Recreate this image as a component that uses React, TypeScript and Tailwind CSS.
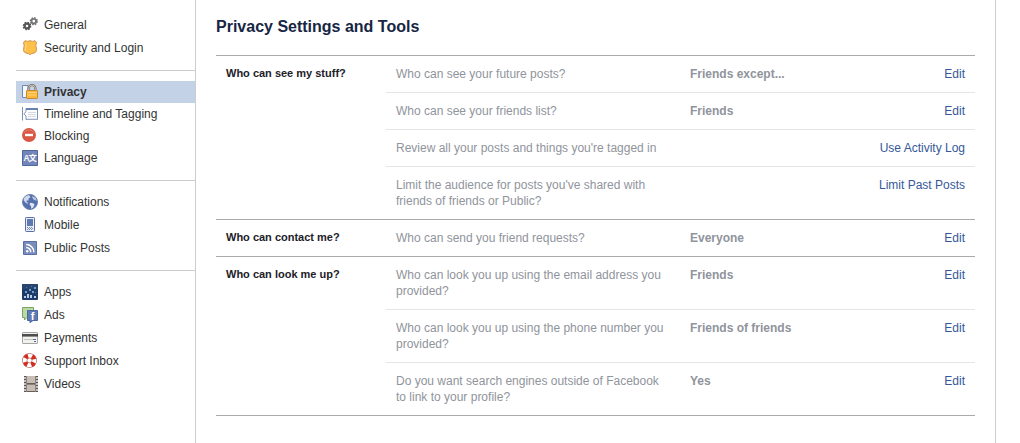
import React from 'react';

interface NavItem {
  label: string;
  icon: React.ReactNode;
  active?: boolean;
}

interface Setting {
  question: string;
  value?: string;
  action: string;
}

interface Section {
  title: string;
  settings: Setting[];
}

const Icon: React.FC<{ children: React.ReactNode }> = ({ children }) => (
  <svg className="w-4 h-4 shrink-0" viewBox="0 0 16 16" fill="none" aria-hidden="true">
    {children}
  </svg>
);

const gears = (
  <Icon>
    <circle cx="5" cy="9" r="2.4" stroke="#555" strokeWidth="2.2" />
    <circle cx="5" cy="9" r="3.7" stroke="#555" strokeWidth="1.3" strokeDasharray="1.6 1.3" />
    <circle cx="11.8" cy="4.2" r="2.3" stroke="#757575" strokeWidth="1.9" />
    <circle cx="11.8" cy="4.2" r="3.5" stroke="#757575" strokeWidth="1.3" strokeDasharray="1.5 1.25" />
  </Icon>
);

const badge = (
  <Icon>
    <path
      d="M3 .7 L5.4 1.4 L8 .7 L10.6 1.4 L13 .7 L14.6 2.8 C13.6 4.6 13.8 6 14.3 8 C14.8 10.4 14.2 12.6 12 13 C10.4 13.2 9.2 13.6 8 14.6 C6.8 13.6 5.6 13.2 4 13 C1.8 12.6 1.2 10.4 1.7 8 C2.2 6 2.4 4.6 1.4 2.8 Z"
      fill="#fdc04a"
      stroke="#d0954c"
      strokeLinejoin="round"
    />
    <path d="M4 3.4 C4.2 6 3 8 3.6 11" stroke="#ffdc86" />
  </Icon>
);

const lock = (
  <Icon>
    <path d="M.5 1.5h5.5v12H.5z" fill="#f5f8fd" stroke="#6f87b5" />
    <path d="M6.6 7.5V4.6a3.4 3.6 0 0 1 6.8 0v2.9" stroke="#736b60" strokeWidth="2.2" />
    <path d="M6.6 7.5V4.6a3.4 3.6 0 0 1 6.8 0v2.9" stroke="#dedad2" strokeWidth=".8" />
    <rect x="4.5" y="6.5" width="11" height="8" rx=".6" fill="#fdb83a" stroke="#c78834" />
    <path d="M5.5 8.5h9M5.5 11h9" stroke="#ffd27a" />
  </Icon>
);

const timeline = (
  <Icon>
    <path d="M.5 1v13.5" stroke="#8192b4" />
    <path d="M15.5 2.5H4v3.2L1.8 7.8 4 10v3.5h11.5z" fill="#fff" stroke="#7f93ba" />
    <path d="M4 2h12v2H4z" fill="#6681b2" />
    <path d="M6 6.5h8M6 8.5h8M6 10.5h8" stroke="#d4d8e1" />
    <path d="M5 13h10" stroke="#bcc4d5" />
  </Icon>
);

const blocked = (
  <Icon>
    <circle cx="7" cy="7" r="7" fill="#d85845" />
    <path d="M1.5 5a6 5 0 0 1 11 0" stroke="#e58775" strokeWidth=".8" />
    <rect x="3" y="5.8" width="8" height="2.4" fill="#fff" />
  </Icon>
);

const language = (
  <Icon>
    <path d="M.5.5h15v15H.5z" fill="#7486b8" stroke="#4f67a1" />
    <text x="1.6" y="11" fontSize="8.4" fontWeight="700" fill="#fff" fontFamily="'Liberation Sans', sans-serif">
      A
    </text>
    <text x="6.4" y="11" fontSize="8.4" fontWeight="700" fill="#fff" fontFamily="'Noto Sans CJK SC', sans-serif">
      文
    </text>
  </Icon>
);

const globe = (
  <Icon>
    <circle cx="8" cy="8" r="7.5" fill="#5570ac" stroke="#6b82b3" />
    <path d="M2 4.3 C3.5 2.2 5 1.2 7.3 1.3 L8.5 3.2 L6.4 4.8 L6.8 6.4 L4.7 6.6 L4.6 8.1 L6 8.7 L5.7 10 L3.4 8.5 L1.6 6.3 Z" fill="#cfd9ec" />
    <path d="M10 2 L13.5 3.8 L14.7 6.8 L12.2 5.9 L10.8 4.6 Z" fill="#bccae4" />
    <path d="M8 8.8 L11.3 9.3 L12.6 10.8 L11 13.8 L9.2 14.7 L9 12 L7.6 10.7 Z" fill="#dce4f3" />
  </Icon>
);

const phone = (
  <Icon>
    <rect x="3.5" y=".5" width="9" height="14" rx=".8" fill="#e9edf5" stroke="#5a70a3" />
    <path d="M5 2h6v7H5z" fill="#5f7ab0" />
    <path d="M5 10.5h6M5 12.5h6" stroke="#7a8db6" strokeDasharray="1 1" />
    <path d="M6 11.5h5" stroke="#7a8db6" strokeDasharray="1 1" />
  </Icon>
);

const feed = (
  <Icon>
    <path d="M1.5 1.5h13v13h-13z" fill="#7a8cbc" stroke="#586ea4" />
    <circle cx="5.2" cy="11.2" r="1.2" fill="#fff" />
    <path d="M4.2 7.5a4.5 4.5 0 0 1 4.5 4.7M4.2 4.5a7.5 7.5 0 0 1 7.6 7.7" stroke="#fff" strokeWidth="1.5" />
  </Icon>
);

const apps = (
  <Icon>
    <rect width="16" height="16" rx="1" fill="#1f3c68" />
    <path d="M0 1a1 1 0 0 1 1-1h14a1 1 0 0 1 1 1v4H0z" fill="#26456f" />
    <path d="M2 12h2v2H2zM5 10h2v4H5zM8 11h2v3H8zM12 12h2v2h-2z" fill="#b5cde8" />
    <path d="M3 7h2v2H3zM7 5h2v2H7zM10 7h2v2h-2zM12 3h2v2h-2z" fill="#6f9fd1" />
    <path d="M4 3h1v1H4zM9 2h1v1H9zM13 8h1v1h-1z" fill="#4c78ae" />
  </Icon>
);

const ads = (
  <Icon>
    <path d="M.5.5h11v10H5L2.5 13v-2.5h-2z" fill="#b9daa3" stroke="#79a462" />
    <path d="M5.5 3.5h10v10H11l-3 2.2v-2.2H5.5z" fill="#607bb3" stroke="#4a67a1" />
    <text x="8.8" y="13" fontSize="11" fontWeight="700" fill="#fff" fontFamily="'Liberation Sans', sans-serif">
      f
    </text>
  </Icon>
);

const card = (
  <Icon>
    <rect x=".5" y="2.5" width="15" height="11" rx=".5" fill="#f1f1ef" stroke="#a5a5a2" />
    <path d="M0 4h16v2.6H0z" fill="#4d4d4d" />
    <path d="M2 9.5h9" stroke="#c2c2bf" />
    <path d="M11 9.5h3M12 11.5h2" stroke="#5a6c90" />
  </Icon>
);

const lifebuoy = (
  <Icon>
    <circle cx="7.5" cy="7.5" r="4.8" stroke="#a5483c" strokeWidth="5" />
    <circle cx="7.5" cy="7.5" r="4.8" stroke="#fff" strokeWidth="4" />
    <circle
      cx="7.5"
      cy="7.5"
      r="4.8"
      stroke="#d22e20"
      strokeWidth="4.4"
      strokeDasharray="3.4 4.14"
      strokeDashoffset="-2.07"
    />
  </Icon>
);

const film = (
  <Icon>
    <path d="M2 0h14v16H2z" fill="#8b827c" />
    <path d="M5 0h8v7H5zM5 9h8v6H5z" fill="#c6bdb5" />
    <path d="M5 7.5h8M5 15.5h8" stroke="#665e59" />
    <path d="M3 0v16M15 0v16" stroke="#5a5450" strokeWidth="2" />
    <path d="M3 1v15M15 1v15" stroke="#f4f1ee" strokeWidth="1.4" strokeDasharray="2 1" />
  </Icon>
);

const navGroups: NavItem[][] = [
  [
    { label: 'General', icon: gears },
    { label: 'Security and Login', icon: badge },
  ],
  [
    { label: 'Privacy', icon: lock, active: true },
    { label: 'Timeline and Tagging', icon: timeline },
    { label: 'Blocking', icon: blocked },
    { label: 'Language', icon: language },
  ],
  [
    { label: 'Notifications', icon: globe },
    { label: 'Mobile', icon: phone },
    { label: 'Public Posts', icon: feed },
  ],
  [
    { label: 'Apps', icon: apps },
    { label: 'Ads', icon: ads },
    { label: 'Payments', icon: card },
    { label: 'Support Inbox', icon: lifebuoy },
    { label: 'Videos', icon: film },
  ],
];

const sections: Section[] = [
  {
    title: 'Who can see my stuff?',
    settings: [
      { question: 'Who can see your future posts?', value: 'Friends except...', action: 'Edit' },
      { question: 'Who can see your friends list?', value: 'Friends', action: 'Edit' },
      { question: "Review all your posts and things you're tagged in", action: 'Use Activity Log' },
      {
        question: "Limit the audience for posts you've shared with friends of friends or Public?",
        action: 'Limit Past Posts',
      },
    ],
  },
  {
    title: 'Who can contact me?',
    settings: [{ question: 'Who can send you friend requests?', value: 'Everyone', action: 'Edit' }],
  },
  {
    title: 'Who can look me up?',
    settings: [
      { question: 'Who can look you up using the email address you provided?', value: 'Friends', action: 'Edit' },
      {
        question: 'Who can look you up using the phone number you provided?',
        value: 'Friends of friends',
        action: 'Edit',
      },
      {
        question: 'Do you want search engines outside of Facebook to link to your profile?',
        value: 'Yes',
        action: 'Edit',
      },
    ],
  },
];

const Sidebar: React.FC = () => (
  <nav className="w-[195px] shrink-0 pl-4 pt-1" aria-label="Settings">
    {navGroups.map((group, index) => (
      <ul
        key={group[0].label}
        className={`flex flex-col pt-[10px] pb-[11px] ${index > 0 ? 'border-t border-[#cccccc]' : ''} ${
          index === 1 ? '' : 'gap-px'
        }`}
      >
        {group.map((item) => (
          <li key={item.label}>
            <a
              href="#"
              aria-current={item.active ? 'page' : undefined}
              className={`flex h-[22px] items-center gap-1.5 pl-1.5 ${
                item.active ? 'bg-[#c4d2e7] font-bold' : 'hover:bg-[#eff2f7]'
              }`}
            >
              {item.icon}
              <span>{item.label}</span>
            </a>
          </li>
        ))}
      </ul>
    ))}
  </nav>
);

const SettingRow: React.FC<{ setting: Setting }> = ({ setting }) => (
  <li className="flex px-[10px] py-[10px] text-[#90949c]">
    <span className="w-[270px] shrink-0">{setting.question}</span>
    <span className="ml-6 flex-1 font-bold">{setting.value}</span>
    <a href="#" className="shrink-0 text-[#365899] hover:underline">
      {setting.action}
    </a>
  </li>
);

export default function App() {
  return (
    <div className="flex min-h-screen bg-white pr-6 font-['Liberation_Sans',Arial,sans-serif] text-[12px] leading-4 text-[#333333]">
      <Sidebar />
      <main className="flex-1 border-x border-[#cccccc] px-5 pt-[17px]">
        <h1 className="mb-[18px] text-[16px] leading-5 font-bold text-[#162643]">Privacy Settings and Tools</h1>
        <div className="border-b border-[#aaaaaa]">
          {sections.map((section) => (
            <section key={section.title} className="flex border-t border-[#aaaaaa]">
              <h2 className="w-[170px] shrink-0 py-[9px] pl-[10px] text-[11px] font-bold text-[#1d2129]">
                {section.title}
              </h2>
              <ul className="flex-1 divide-y divide-[#e5e5e5]">
                {section.settings.map((setting) => (
                  <SettingRow key={setting.question} setting={setting} />
                ))}
              </ul>
            </section>
          ))}
        </div>
      </main>
    </div>
  );
}
